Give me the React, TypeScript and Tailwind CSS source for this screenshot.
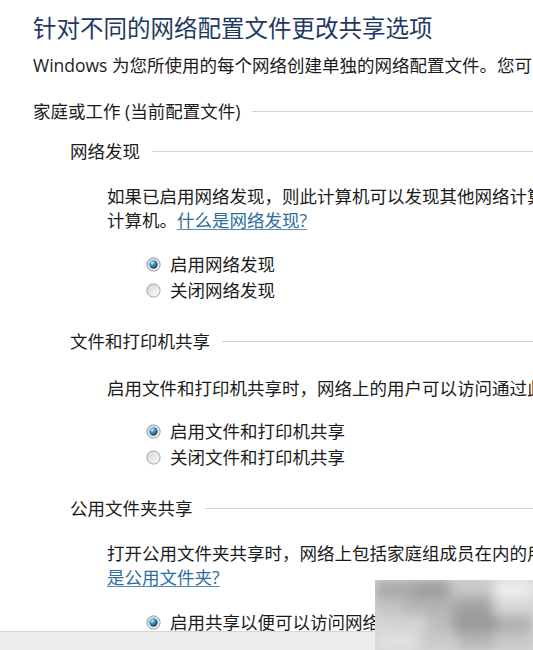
import { useId } from "react";

const font = "font-['Open_Sans','Noto_Sans_CJK_SC',sans-serif]";

function Radio({ checked }: { checked?: boolean }) {
  const id = useId().replace(/:/g, "");
  return (
    <svg width="15" height="15" viewBox="0 0 15 15" className="shrink-0">
      <defs>
        <linearGradient id={`ring${id}`} x1="0" y1="0" x2="1" y2="1">
          <stop offset="0" stopColor="#d2d2d2" />
          <stop offset="1" stopColor="#ffffff" />
        </linearGradient>
        <radialGradient id={`dot${id}`} cx="0.35" cy="0.3" r="0.75">
          <stop offset="0" stopColor="#c8f2ff" />
          <stop offset="0.45" stopColor="#3a90ba" />
          <stop offset="1" stopColor="#103c5a" />
        </radialGradient>
      </defs>
      <circle cx="7.5" cy="7.5" r="6.6" fill={`url(#ring${id})`} stroke={checked ? "#8c9aa6" : "#a4a4a4"} />
      {checked && <circle cx="7.5" cy="7.5" r="4.2" fill={`url(#dot${id})`} />}
    </svg>
  );
}

function GroupHeader({ title, className }: { title: string; className?: string }) {
  return (
    <div className={`flex items-center leading-[24px] ${className ?? ""}`}>
      <span className="whitespace-nowrap">{title}</span>
      <div className="ml-3 h-px flex-1 bg-[#d4d4d4]" />
    </div>
  );
}

function Option({ label, checked }: { label: string; checked?: boolean }) {
  return (
    <div className="flex h-[26px] items-center gap-[9px] pl-[146px] whitespace-nowrap">
      <Radio checked={checked} />
      <span>{label}</span>
    </div>
  );
}

const linkCls = "text-[#2f6e9c] underline decoration-[#5a8fb4] underline-offset-2";

// rows of grey blocks, blurred together into a smudge
const smudge = [
  ["bg-[#a8a8a8] w-[40px]", "bg-[#9c9c9c] w-[34px]", "bg-[#c6c6c6] w-[44px]", "bg-[#ededed] w-[40px]"],
  ["bg-[#c2c2c2] w-[30px]", "bg-[#b4b4b4] w-[50px]", "bg-[#a2a2a2] w-[38px]", "bg-[#d8d8d8] w-[40px]"],
  ["bg-[#d4d4d4] w-[52px]", "bg-[#bdbdbd] w-[26px]", "bg-[#9a9a9a] w-[44px]", "bg-[#b0b0b0] w-[36px]"],
  ["bg-[#e0e0e0] w-[44px]", "bg-[#cacaca] w-[40px]", "bg-[#b6b6b6] w-[34px]", "bg-[#c8c8c8] w-[40px]"],
];

export default function App() {
  return (
    <div className={`relative flex h-[650px] w-[533px] flex-col overflow-hidden bg-white text-[17.5px] text-[#1b1b1b] ${font}`}>
      <main className="flex-1 overflow-hidden">
        <h1 className="pl-[33px] pt-[12px] text-[23.5px] leading-[32px] whitespace-nowrap text-[#1e3a64]">
          针对不同的网络配置文件更改共享选项
        </h1>
        <p className="mt-[9px] pl-[33px] leading-[24px] whitespace-nowrap">
          Windows 为您所使用的每个网络创建单独的网络配置文件。您可以针对每个配置文件选择特定的选项。
        </p>

        <GroupHeader title="家庭或工作 (当前配置文件)" className="mt-[22px] pl-[33px]" />

        {/* 网络发现 */}
        <GroupHeader title="网络发现" className="mt-[16px] pl-[70px]" />
        <div className="mt-[21px] pl-[107px] leading-[24px] whitespace-nowrap">
          <div>如果已启用网络发现，则此计算机可以发现其他网络计算机和设备，而且其他网络计算机亦可发现此</div>
          <div>
            计算机。<a className={linkCls}>什么是网络发现?</a>
          </div>
        </div>
        <div className="mt-[19px]">
          <Option label="启用网络发现" checked />
          <Option label="关闭网络发现" />
        </div>

        {/* 文件和打印机共享 */}
        <GroupHeader title="文件和打印机共享" className="mt-[26px] pl-[70px]" />
        <div className="mt-[23px] pl-[107px] leading-[24px] whitespace-nowrap">
          启用文件和打印机共享时，网络上的用户可以访问通过此计算机共享的文件和打印机。
        </div>
        <div className="mt-[18px]">
          <Option label="启用文件和打印机共享" checked />
          <Option label="关闭文件和打印机共享" />
        </div>

        {/* 公用文件夹共享 */}
        <GroupHeader title="公用文件夹共享" className="mt-[26px] pl-[70px]" />
        <div className="mt-[21px] pl-[107px] leading-[24px] whitespace-nowrap">
          <div>打开公用文件夹共享时，网络上包括家庭组成员在内的用户都可以访问公用文件夹中的文件。什么</div>
          <div>
            <a className={linkCls}>是公用文件夹?</a>
          </div>
        </div>
        <div className="mt-[20px]">
          <Option label="启用共享以便可以访问网络的用户可以读取和写入公用文件夹中的文件" checked />
        </div>
      </main>

      <footer className="h-[19px] shrink-0 border-t border-[#d6d6d6] bg-[#ededed]" />

      {/* blurred stamp in the lower right corner */}
      <div className="absolute bottom-0 right-0 h-[70px] w-[158px] overflow-hidden bg-[#d6d6d6]">
        <div className="flex h-full flex-col blur-[6px]">
          {smudge.map((row, i) => (
            <div key={i} className="flex flex-1">
              {row.map((c, j) => (
                <div key={j} className={c} />
              ))}
            </div>
          ))}
        </div>
      </div>
    </div>
  );
}
